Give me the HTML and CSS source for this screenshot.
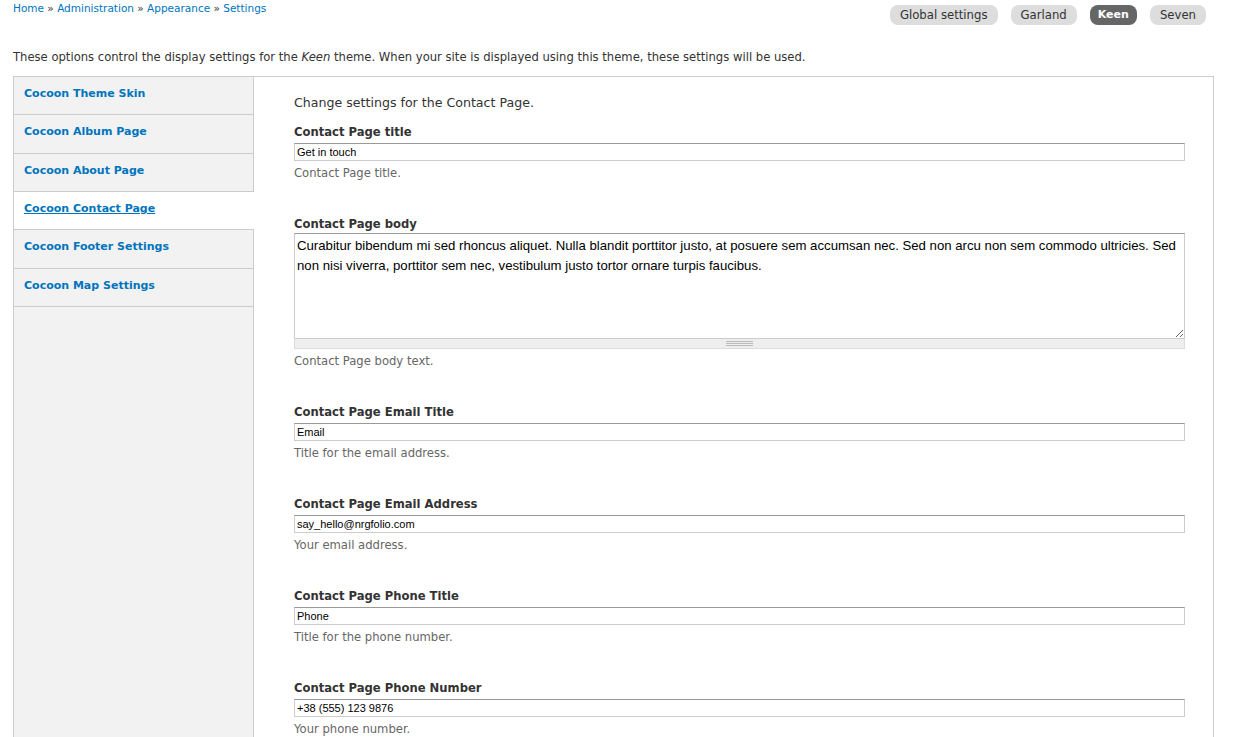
FILE: index.html
```html
<!DOCTYPE html>
<html>
<head>
<meta charset="utf-8">
<link rel="stylesheet" href="styles.css">
</head>
<body>
<div class="page">
  <div class="header">
    <div class="breadcrumb"><a href="#">Home</a> » <a href="#">Administration</a> » <a href="#">Appearance</a> » <a href="#">Settings</a></div>
    <ul class="tabs">
      <li><a href="#">Global settings</a></li>
      <li><a href="#">Garland</a></li>
      <li class="active"><a href="#">Keen</a></li>
      <li><a href="#">Seven</a></li>
    </ul>
  </div>
  <p class="intro">These options control the display settings for the <em>Keen</em> theme. When your site is displayed using this theme, these settings will be used.</p>
  <div class="vtabs">
    <ul class="vtabs-menu">
      <li><a href="#">Cocoon Theme Skin</a></li>
      <li><a href="#">Cocoon Album Page</a></li>
      <li><a href="#">Cocoon About Page</a></li>
      <li class="selected"><a href="#">Cocoon Contact Page</a></li>
      <li><a href="#">Cocoon Footer Settings</a></li>
      <li><a href="#">Cocoon Map Settings</a></li>
    </ul>
    <div class="vtabs-pane">
      <p class="pane-intro">Change settings for the Contact Page.</p>
      <div class="form-item">
        <label>Contact Page title</label>
        <input class="text" type="text" value="Get in touch">
        <div class="desc">Contact Page title.</div>
      </div>
      <div class="form-item">
        <label>Contact Page body</label>
        <div class="textarea-wrap">
          <textarea>Curabitur bibendum mi sed rhoncus aliquet. Nulla blandit porttitor justo, at posuere sem accumsan nec. Sed non arcu non sem commodo ultricies. Sed non nisi viverra, porttitor sem nec, vestibulum justo tortor ornare turpis faucibus.</textarea>
          <div class="grippie"><span class="grip"></span></div>
        </div>
        <div class="desc">Contact Page body text.</div>
      </div>
      <div class="form-item">
        <label>Contact Page Email Title</label>
        <input class="text" type="text" value="Email">
        <div class="desc">Title for the email address.</div>
      </div>
      <div class="form-item">
        <label>Contact Page Email Address</label>
        <input class="text" type="text" value="say_hello@nrgfolio.com">
        <div class="desc">Your email address.</div>
      </div>
      <div class="form-item">
        <label>Contact Page Phone Title</label>
        <input class="text" type="text" value="Phone">
        <div class="desc">Title for the phone number.</div>
      </div>
      <div class="form-item">
        <label>Contact Page Phone Number</label>
        <input class="text" type="text" value="+38 (555) 123 9876">
        <div class="desc">Your phone number.</div>
      </div>
    </div>
  </div>
</div>
</body>
</html>
```

FILE: styles.css
```css
html, body {
  margin: 0;
  padding: 0;
  background: #fff;
}
body {
  font-family: "DejaVu Sans", Verdana, sans-serif;
  font-size: 11px;
  color: #333;
}
a {
  color: #0074bd;
  text-decoration: none;
}
.page {
  padding: 0 21px 0 13px;
}
.header {
  display: flex;
  justify-content: space-between;
  align-items: flex-start;
  height: 40px;
}
.breadcrumb {
  font-size: 10.5px;
  line-height: 14px;
  padding-top: 1px;
  color: #333;
}
.tabs {
  list-style: none;
  margin: 5px 8px 0 0;
  padding: 0;
  display: flex;
  gap: 13px;
}
.tabs li a {
  display: block;
  height: 20px;
  line-height: 20px;
  padding: 0 10px;
  border-radius: 8px;
  background: #ddd;
  color: #333;
  font-size: 11.7px;
}
.tabs li.active a {
  background: #666;
  color: #fff;
  font-weight: bold;
  padding: 0 8px;
  font-size: 11px;
}
.intro {
  margin: 0;
  padding-top: 10px;
  line-height: 14px;
  height: 26px;
  font-size: 11.6px;
}
.vtabs {
  display: flex;
  border: 1px solid #ccc;
  min-height: 700px;
}
.vtabs-menu {
  list-style: none;
  margin: 0;
  padding: 0;
  width: 239px;
  flex: none;
  background: #f2f2f2;
  border-right: 1px solid #ccc;
}
.vtabs-menu li {
  border-bottom: 1px solid #ccc;
  height: 37.35px;
  box-sizing: content-box;
}
.vtabs-menu li a {
  display: block;
  padding: 9px 10px 0;
  line-height: 16px;
  font-size: 11px;
  font-weight: bold;
}
.vtabs-menu li.selected {
  background: #fff;
  position: relative;
  margin-right: -1px;
}
.vtabs-menu li.selected a {
  text-decoration: underline;
}
.vtabs-pane {
  flex: 1;
  padding: 18px 28px 0 40px;
}
.pane-intro {
  margin: 0 0 13px;
  font-size: 12.6px;
  line-height: 16px;
}
.form-item {
  margin-bottom: 35px;
}
.form-item label {
  display: block;
  font-weight: bold;
  font-size: 11.6px;
  line-height: 16px;
  margin-bottom: 3px;
}
input.text {
  display: block;
  box-sizing: border-box;
  width: 100%;
  height: 18px;
  margin: 0;
  padding: 0 2px;
  border: 1px solid #ccc;
  border-top-color: #999;
  font-family: "Liberation Sans", Arial, sans-serif;
  font-size: 11px;
  color: #000;
}
.textarea-wrap {
  display: flex;
  flex-direction: column;
  margin-top: -2px;
}
textarea {
  display: block;
  box-sizing: border-box;
  width: 100%;
  height: 105px;
  margin: 0;
  padding: 2px 2px;
  border: 1px solid #ccc;
  border-top-color: #999;
  border-bottom: none;
  font-family: "Liberation Sans", Arial, sans-serif;
  font-size: 13.2px;
  line-height: 20px;
  color: #000;
  resize: vertical;
}
.grippie {
  height: 9px;
  background: #eee;
  border: 1px solid #ddd;
  border-top-color: #ccc;
  display: flex;
  justify-content: center;
  align-items: center;
}
.grip {
  width: 27px;
  height: 5px;
  border-top: 1px solid #bbb;
  border-bottom: 1px solid #bbb;
  box-sizing: border-box;
  background: linear-gradient(#eee 1px, #bbb 1px, #bbb 2px, #eee 2px);
}
.desc {
  margin-top: 4px;
  line-height: 16px;
  font-size: 11.6px;
  color: #666;
}
```
